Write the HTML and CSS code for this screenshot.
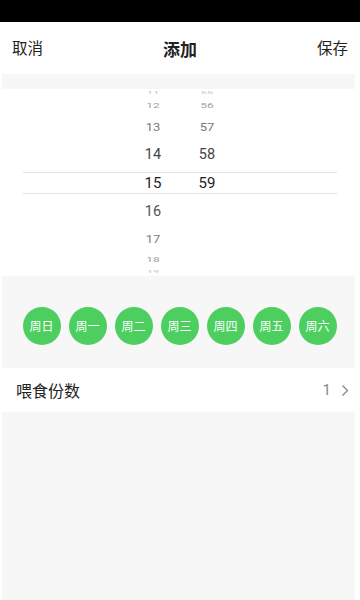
FILE: index.html
```html
<!DOCTYPE html>
<html lang="zh">
<head>
<meta charset="utf-8">
<link rel="stylesheet" href="styles.css">
</head>
<body>
<div class="status"></div>
<header class="nav">
  <span class="nav-btn">取消</span>
  <span class="nav-title">添加</span>
  <span class="nav-btn">保存</span>
</header>
<div class="gap gap-top"></div>
<section class="picker">
  <div class="band"></div>
  <div class="col">
    <div class="it d4">11</div>
    <div class="it d3">12</div>
    <div class="it d2">13</div>
    <div class="it d1">14</div>
    <div class="it d0">15</div>
    <div class="it d1 b">16</div>
    <div class="it d2 b">17</div>
    <div class="it d3 b">18</div>
    <div class="it d4 b">19</div>
  </div>
  <div class="col">
    <div class="it d4">55</div>
    <div class="it d3">56</div>
    <div class="it d2">57</div>
    <div class="it d1">58</div>
    <div class="it d0">59</div>
    <div class="it d1 b"></div>
    <div class="it d2 b"></div>
    <div class="it d3 b"></div>
    <div class="it d4 b"></div>
  </div>
</section>
<section class="days">
  <span class="day">周日</span>
  <span class="day">周一</span>
  <span class="day">周二</span>
  <span class="day">周三</span>
  <span class="day">周四</span>
  <span class="day">周五</span>
  <span class="day">周六</span>
</section>
<section class="row">
  <span class="row-label">喂食份数</span>
  <span class="row-value">1
    <svg class="chev" width="8" height="13" viewBox="0 0 8 13"><path d="M1.5 1.5 L6.5 6.5 L1.5 11.5" fill="none" stroke="#8a8a8a" stroke-width="1.4"/></svg>
  </span>
</section>
<div class="rest"></div>
</body>
</html>
```
FILE: styles.css
```css
* { box-sizing: border-box; }
html, body { margin: 0; padding: 0; }
body {
  width: 360px;
  height: 600px;
  overflow: hidden;
  background: #fff;
  font-family: "Noto Sans CJK SC", "Noto Sans", sans-serif;
  color: #222;
}
.status { height: 22px; background: #000; }
.nav {
  height: 52px;
  display: flex;
  align-items: center;
  justify-content: space-between;
  padding: 0 12px 0 12px;
  background: #fff;
}
.nav-btn { font-size: 15.5px; color: #222; line-height: 1; }
.nav-title { font-size: 17px; font-weight: 700; color: #222; line-height: 1; }
.gap { background: #f7f7f7; margin: 0 5px 0 2px; }
.gap-top { height: 15px; }
.picker {
  position: relative;
  height: 187px;
  overflow: hidden;
  display: flex;
  justify-content: center;
  align-items: center;
  background: #fff;
  font-family: Roboto, "Noto Sans", sans-serif;
}
.band {
  position: absolute;
  left: 23px;
  right: 23px;
  top: 83px;
  height: 22px;
  border-top: 1px solid #e2e2e2;
  border-bottom: 1px solid #e2e2e2;
}
.col {
  width: 54px;
  display: flex;
  flex-direction: column;
  align-items: center;
}
.it {
  width: 100%;
  display: flex;
  align-items: center;
  justify-content: center;
  font-size: 14.5px;
}
.d0 { height: 28px; color: #1e1e1e; font-size: 15px; }
.d1 { height: 29px; color: #444; transform: scaleY(0.96); }
.d1.b { color: #555; }
.d2 { height: 26px; color: #777; font-size: 13px; transform: scaleY(0.82); }
.d2.b { color: #808080; }
.d3 { height: 16px; color: #a0a0a0; font-size: 12px; transform: scaleY(0.55); }
.d4 { height: 9px; color: #c4c4c4; font-size: 11px; transform: scaleY(0.25); }
.days {
  height: 92px;
  margin: 0 5px 0 2px;
  background: #f7f7f7;
  display: flex;
  align-items: center;
  justify-content: center;
  gap: 8px;
  padding-left: 2px;
}
.day {
  width: 38px;
  height: 38px;
  border-radius: 50%;
  background: #4ccf5f;
  color: #fff;
  font-size: 12px;
  display: flex;
  align-items: center;
  justify-content: center;
  margin-top: 7px;
}
.row {
  height: 44px;
  display: flex;
  align-items: center;
  justify-content: space-between;
  padding: 0 11px 0 16px;
  background: #fff;
}
.row-label { font-size: 16px; color: #222; }
.row-value {
  display: flex;
  align-items: center;
  gap: 10px;
  font-size: 15px;
  color: #8a8a8a;
  font-family: Roboto, "Noto Sans", sans-serif;
}
.chev { display: block; }
.rest {
  height: 190px;
  margin: 0 5px 0 2px;
  background: #f7f7f7;
}
```
